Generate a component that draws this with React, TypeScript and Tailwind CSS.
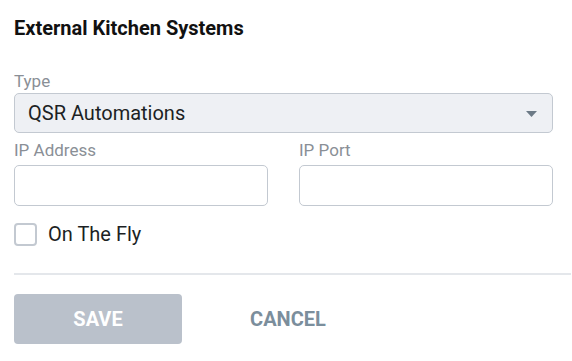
import { useState } from 'react'

export default function App() {
  const [onTheFly, setOnTheFly] = useState(false)

  return (
    <div className="min-h-screen bg-white px-[14px] pt-[16px] font-['Roboto',sans-serif]">
      <h1 className="text-[20px] font-bold leading-[24px] text-[#111]">External Kitchen Systems</h1>

      <div className="mt-[31px] w-[539px]">
        <label className="block text-[17px] leading-[20px] text-[#8a8f96]">Type</label>
        <div className="mt-[2px] flex h-[40px] items-center justify-between rounded-[5px] border border-[#c3c9d1] bg-[#eef0f4] pl-[13px] pr-[15px]">
          <span className="text-[20px] leading-[24px] text-[#1c1f24]">QSR Automations</span>
          <svg width="11" height="6" viewBox="0 0 11 6" className="mt-[1px]">
            <path d="M0 0h11L5.5 6z" fill="#6c7a86" />
          </svg>
        </div>

        <div className="mt-[7px] grid grid-cols-2 gap-[31px]">
          <div>
            <label className="block text-[17px] leading-[20px] text-[#8a8f96]">IP Address</label>
            <input className="mt-[5px] h-[41px] w-full rounded-[5px] border border-[#c3c9d1] bg-white px-3 text-[20px] outline-none" />
          </div>
          <div>
            <label className="block text-[17px] leading-[20px] text-[#8a8f96]">IP Port</label>
            <input className="mt-[5px] h-[41px] w-full rounded-[5px] border border-[#c3c9d1] bg-white px-3 text-[20px] outline-none" />
          </div>
        </div>

        <label className="mt-[16px] flex cursor-pointer items-center gap-[11px]">
          <button
            type="button"
            onClick={() => setOnTheFly(!onTheFly)}
            className="h-[23px] w-[23px] rounded-[4px] border-2 border-[#c3c9d1] bg-white"
          />
          <span className="text-[20px] leading-[24px] text-[#1c1f24]">On The Fly</span>
        </label>
      </div>

      <div className="mr-[-13px] mt-[27px] h-[2px] bg-[#e4e7eb]" />

      <div className="mt-[19px] flex gap-[22px]">
        <button
          type="button"
          disabled
          className="h-[50px] w-[168px] rounded-[4px] bg-[#bac1cb] text-[20px] font-bold text-white"
        >
          SAVE
        </button>
        <button type="button" className="h-[50px] w-[168px] text-[20px] font-bold text-[#7b8e9c]">
          CANCEL
        </button>
      </div>
    </div>
  )
}
